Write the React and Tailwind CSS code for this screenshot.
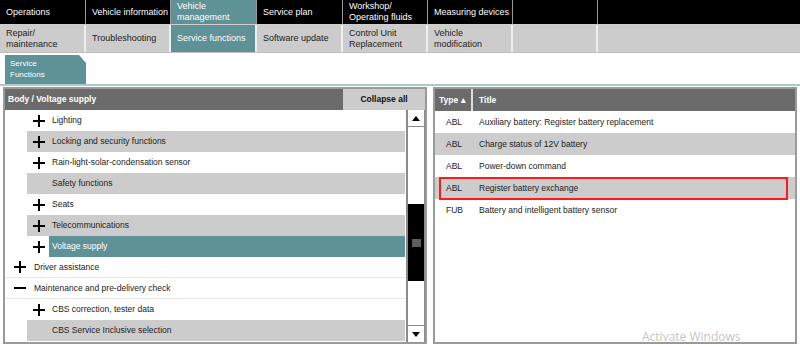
import React from 'react';

const F = { fontFamily: '"Liberation Sans", Arial, sans-serif' };

function Plus() {
  return (
    <svg width="14" height="14" viewBox="0 0 14 14" className="shrink-0">
      <path d="M7 1v12M1 7h12" stroke="#000" strokeWidth="2" />
    </svg>
  );
}

function Minus() {
  return (
    <svg width="14" height="14" viewBox="0 0 14 14" className="shrink-0">
      <path d="M1 7h12" stroke="#000" strokeWidth="2" />
    </svg>
  );
}

const topTabs = [
  ['Operations'],
  ['Vehicle information'],
  ['Vehicle', 'management'],
  ['Service plan'],
  ['Workshop/', 'Operating fluids'],
  ['Measuring devices'],
  [''],
  [''],
];

const subTabs = [
  ['Repair/', 'maintenance'],
  ['Troubleshooting'],
  ['Service functions'],
  ['Software update'],
  ['Control Unit', 'Replacement'],
  ['Vehicle', 'modification'],
  [''],
  [''],
];

const tree = [
  { lvl: 1, icon: 'plus', text: 'Lighting' },
  { lvl: 1, icon: 'plus', text: 'Locking and security functions', grey: true },
  { lvl: 1, icon: 'plus', text: 'Rain-light-solar-condensation sensor' },
  { lvl: 1, icon: null, text: 'Safety functions', grey: true },
  { lvl: 1, icon: 'plus', text: 'Seats' },
  { lvl: 1, icon: 'plus', text: 'Telecommunications', grey: true },
  { lvl: 1, icon: 'plus', text: 'Voltage supply', active: true },
  { lvl: 0, icon: 'plus', text: 'Driver assistance' },
  { lvl: 0, icon: 'minus', text: 'Maintenance and pre-delivery check' },
  { lvl: 1, icon: 'plus', text: 'CBS correction, tester data' },
  { lvl: 1, icon: null, text: 'CBS Service Inclusive selection', grey: true },
  { lvl: 1, icon: 'plus', text: '' },
];

const results = [
  ['ABL', 'Auxiliary battery: Register battery replacement'],
  ['ABL', 'Charge status of 12V battery', true],
  ['ABL', 'Power-down command'],
  ['ABL', 'Register battery exchange', true],
  ['FUB', 'Battery and intelligent battery sensor'],
];

const cols = 'grid grid-cols-[86px_85px_86px_86px_85px_85px_85px_1fr]';

export default function App() {
  return (
    <div className="w-[800px] h-[347px] bg-white overflow-hidden text-[9px] leading-[11px]" style={F}>
      {/* top nav */}
      <div className={`${cols} h-[25px] bg-black border-b border-[#cfcfcf]`}>
        {topTabs.map((t, i) => (
          <div
            key={i}
            className={`flex flex-col justify-center px-[6px] whitespace-nowrap ${i === 2 ? 'bg-[#5f9296] text-white' : 'text-white'} ${i < 7 ? 'border-r border-[#9a9a9a]' : ''}`}
          >
            {t.map((l, j) => (
              <span key={j}>{l}</span>
            ))}
          </div>
        ))}
      </div>
      <div className={`${cols} h-[28px] bg-[#cccccc] border-b border-[#bdbdbd]`}>
        {subTabs.map((t, i) => (
          <div
            key={i}
            className={`flex flex-col justify-center px-[6px] whitespace-nowrap ${i === 2 ? 'bg-[#5f9296] text-white' : 'text-[#222]'} ${i < 7 ? 'border-r-2 border-[#eeeeee]' : ''}`}
          >
            {t.map((l, j) => (
              <span key={j}>{l}</span>
            ))}
          </div>
        ))}
      </div>

      {/* page tab */}
      <div className="h-[31px] pl-[5px] flex items-end">
        <div
          className="w-[81px] h-[29px] bg-[#5f9296] text-white text-[8px] leading-[11px] pl-[5px] pt-[3px]"
          style={{ clipPath: 'polygon(0 0, 74px 0, 81px 8px, 81px 100%, 0 100%)' }}
        >
          Service
          <br />
          Functions
        </div>
      </div>
      <div className="h-[2px] bg-[#a9cacd]" />

      <div className="flex gap-[6px] pl-[3px] pr-[3px] pt-[1px]">
        {/* left panel */}
        <div className="w-[424px] h-[257px] border-2 border-[#9a9a9a] flex flex-col">
          <div className="h-[21px] flex shrink-0 text-[8.5px]">
            <div className="flex-1 bg-[#6b6b6b] text-white font-bold flex items-center pl-[3px]">
              Body / Voltage supply
            </div>
            <div className="w-[82px] bg-[#cccccc] text-[#111] font-bold flex items-center justify-center">Collapse all</div>
          </div>
          <div className="flex flex-1 min-h-0">
            <div className="flex-1 overflow-hidden text-[8.5px]">
              {tree.map((r, i) => (
                <div
                  key={i}
                  className={`h-[21px] flex items-center ${r.lvl === 1 ? 'ml-[22px]' : 'pl-[4px] border-b border-[#e6e6e6]'} ${r.grey ? 'bg-[#cccccc]' : ''}`}
                >
                  <div className={`w-[22px] flex justify-center shrink-0 ${r.lvl === 1 ? 'pl-[2px]' : ''}`}>
                    {r.icon === 'plus' && <Plus />}
                    {r.icon === 'minus' && <Minus />}
                  </div>
                  <div className={`flex-1 h-full flex items-center pl-[3px] ${r.active ? 'bg-[#5f9296] text-white' : 'text-[#222]'}`}>
                    {r.text}
                  </div>
                </div>
              ))}
            </div>
            {/* scrollbar */}
            <div className="w-[19px] border-l-2 border-r border-[#8a8a8a] flex flex-col ml-[1px]">
              <div className="h-[17px] border-b border-[#8a8a8a] flex items-center justify-center">
                <svg width="8" height="5" viewBox="0 0 8 5">
                  <path d="M0 5L4 0L8 5Z" fill="#000" />
                </svg>
              </div>
              <div className="h-[77px]" />
              <div className="h-[77px] bg-black flex items-center justify-center">
                <svg width="9" height="8" viewBox="0 0 9 8">
                  <path d="M0 1h9M0 3h9M0 5h9M0 7h9" stroke="#bbb" strokeWidth="1" />
                </svg>
              </div>
              <div className="flex-1" />
              <div className="h-[17px] border-t border-[#8a8a8a] flex items-center justify-center">
                <svg width="8" height="5" viewBox="0 0 8 5">
                  <path d="M0 0L8 0L4 5Z" fill="#000" />
                </svg>
              </div>
            </div>
          </div>
        </div>

        {/* right panel */}
        <div className="flex-1 h-[257px] border-2 border-[#9a9a9a] relative text-[8.5px]">
          <div className="h-[22px] bg-[#6b6b6b] text-white font-bold flex">
            <div className="w-[38px] flex items-center pl-[4px] border-r-2 border-[#dddddd]">Type ▴</div>
            <div className="flex items-center pl-[6px]">Title</div>
          </div>
          {results.map((r, i) => (
            <div key={i} className={`h-[22px] flex items-center text-[#222] ${r[2] ? 'bg-[#cccccc]' : ''}`}>
              <div className="w-[38px] pl-[11px]">{r[0]}</div>
              <div className="pl-[6px]">{r[1]}</div>
            </div>
          ))}
          <div className="absolute left-[4px] top-[88px] w-[349px] h-[23px] border-2 border-[#ff1a1a]" />
          <div className="absolute left-[207px] bottom-[0px] text-[12px] text-[#c4c4c4]" style={{ fontFamily: '"Open Sans", sans-serif' }}>
            Activate Windows
          </div>
        </div>
      </div>
    </div>
  );
}
